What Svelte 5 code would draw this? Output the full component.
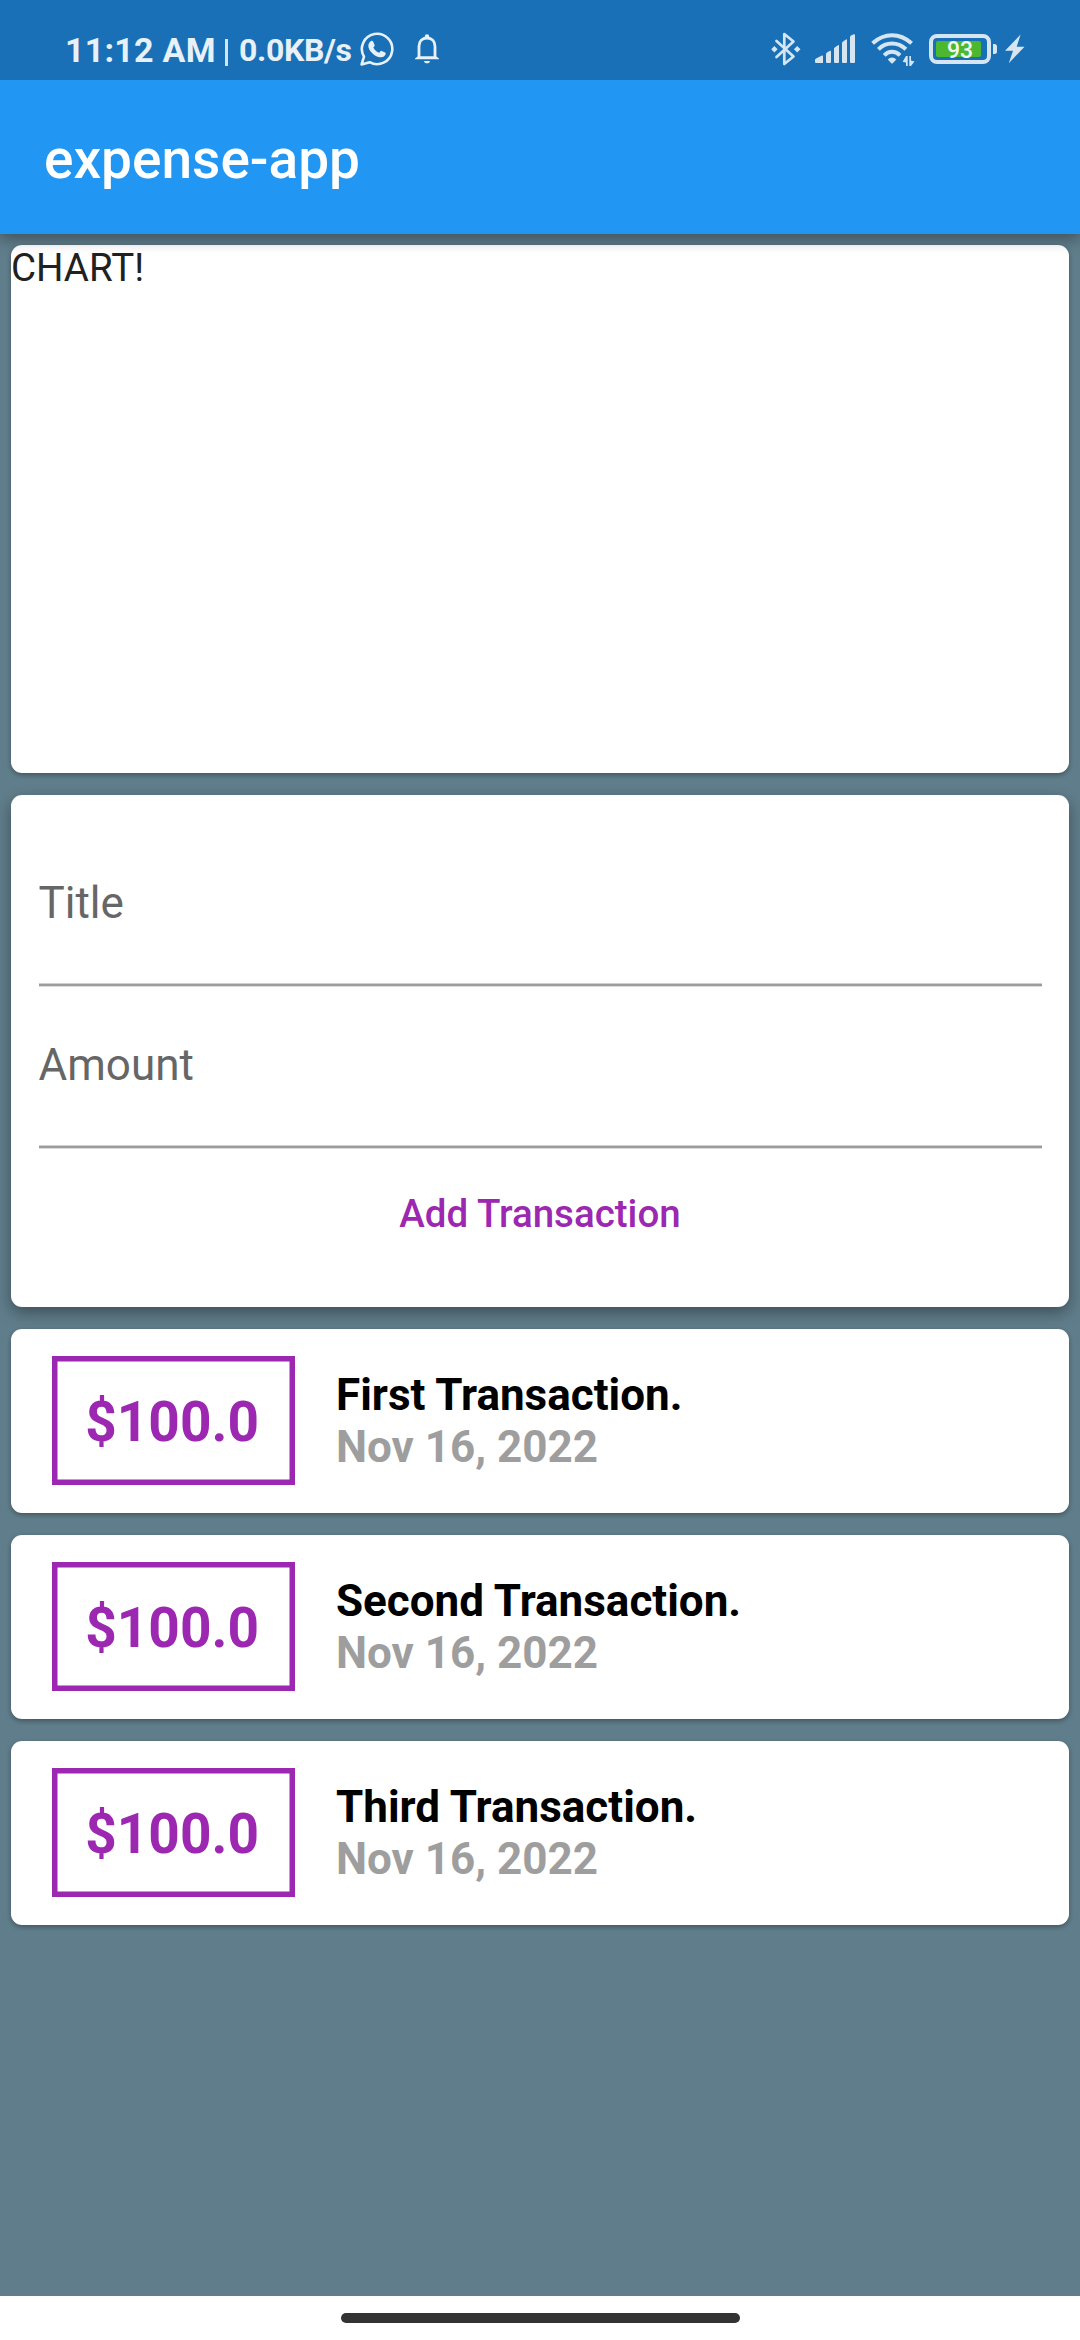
<script>
  const fields = ['Title', 'Amount'];
  const transactions = [
    { title: 'First Transaction.', amount: '$100.0', date: 'Nov 16, 2022' },
    { title: 'Second Transaction.', amount: '$100.0', date: 'Nov 16, 2022' },
    { title: 'Third Transaction.', amount: '$100.0', date: 'Nov 16, 2022' },
  ];
</script>

<div class="screen">
  <div class="status">
    <div class="status-left">
      <span class="time">11:12 AM</span>
      <span class="divider"></span>
      <span class="speed">0.0KB/s</span>
      <svg class="whatsapp" width="34" height="34" viewBox="0 0 34 34">
        <path d="M1.600 32.400 4 24.700A15.200 15.200 0 1 1 9.600 30.200Z" fill="none" stroke="currentColor" stroke-width="2.600" stroke-linejoin="round" />
        <path d="M10.800 9.200c.9-.7 1.900-.6 2.300.3l1.500 3.400c.3.7-.1 1.300-1.300 2.600 1.300 2.500 3.300 4.300 5.900 5.300 1.200-1.500 1.700-2.200 2.500-1.900l3.500 1.700c.7.4.6 1.300.2 2.200-1 2-3.500 2.900-5.800 2.400-5.300-1.200-9-4.700-10.900-9.200-.9-2.400-.1-5.300 2.100-6.800Z" fill="currentColor" />
      </svg>
      <svg class="bell" width="24" height="30" viewBox="0 0 24 30">
        <path d="M4 24V12.300C4 7.200 7.300 4 12 4s8 3.200 8 8.300V24" fill="none" stroke="currentColor" stroke-width="2.800" />
        <path d="M0 25.300V24.500L3 22.300H21L24 24.500V25.300ZM9 27h6c-.2 1.400-1.300 2.300-3 2.300S9.200 28.400 9 27Z" fill="currentColor" />
        <circle cx="12" cy="2.500" r="2.200" fill="currentColor" />
      </svg>
    </div>
    <div class="status-right">
      <svg class="bluetooth" width="30" height="34" viewBox="0 0 30 34">
        <path d="M5.500 9 22.500 24.500 13.300 32V2L22.500 9.500 5.500 25" fill="none" stroke="currentColor" stroke-width="2.700" stroke-linejoin="round" stroke-linecap="round" />
        <path d="M3.400 14 6.600 17.300 3.400 20.600.2 17.300ZM26.200 14 29.500 17.300 26.200 20.600 22.900 17.300Z" fill="currentColor" />
      </svg>
      <svg class="signal" width="40" height="29" viewBox="0 0 40 29">
        <path d="M0 26.200Q0 25 1 24.500L7 21.600Q8 21.300 8 22.300V29H1Q0 29 0 28ZM11 20.200Q11 19.200 12 18.600L15 16.800Q16 16.500 16 17.500V28Q16 29 15 29H12Q11 29 11 28ZM19 14.800Q19 13.800 20 13.200L23 11.200Q24 10.800 24 11.800V28Q24 29 23 29H20Q19 29 19 28ZM27 9.200Q27 8.200 28 7.600L31 5.400Q32 5 32 6V28Q32 29 31 29H28Q27 29 27 28ZM35 3.500Q35 2.300 36 1.600L38 .4Q40-.3 40 1V28Q40 29 39 29H36Q35 29 35 28Z" fill="currentColor" />
      </svg>
      <svg class="wifi" width="44" height="35" viewBox="0 0 44 35">
        <g fill="none" stroke="currentColor" stroke-width="4">
          <path d="M1.600 11.200Q10.500 3.200 21 3.200T40.600 11.200" />
          <path d="M7.400 17.300Q13.200 11.500 21 11.500T34.900 17.300" />
          <path d="M13.200 23.300Q16.500 19.700 21 19.700T29 23.300" />
        </g>
        <path d="M21 25.500q2.500 0 4.300 2L21.700 31.300q-.7.600-1.400 0L16.800 27.500q1.700-2 4.200-2Z" fill="currentColor" />
        <path d="M35 24h1.700v10H35V30.600L31.600 29.700 35 24ZM38.300 24h1.700V28.600L43.500 29.500 40 34H38.300Z" fill="currentColor" />
      </svg>
      <svg class="battery" width="68" height="30" viewBox="0 0 68 30">
        <rect x="2" y="2" width="58" height="26" rx="6" fill="none" stroke="currentColor" stroke-width="4" />
        <rect x="7" y="7" width="45" height="16" rx="2" fill="#4bb830" />
        <path d="M64 10h1.500Q68 10 68 12.500v5Q68 20 65.500 20H64Z" fill="currentColor" />
        <text x="31" y="24" text-anchor="middle">93</text>
      </svg>
      <svg class="bolt" width="20" height="30" viewBox="0 0 20 30">
        <path d="M15.600.5 0 16.700H8L3.800 29.300 19.500 12.700H11.700Z" fill="currentColor" />
      </svg>
    </div>
  </div>

  <header><h1>expense-app</h1></header>

  <main>
    <section class="card chart">CHART!</section>

    <section class="card form">
      {#each fields as field}
        <div class="field">{field}</div>
      {/each}
      <button type="button">Add Transaction</button>
    </section>

    {#each transactions as tx}
      <article class="card tx">
        <div class="amount">{tx.amount}</div>
        <div class="info">
          <div class="name">{tx.title}</div>
          <div class="date">{tx.date}</div>
        </div>
      </article>
    {/each}
  </main>

  <nav><div class="pill"></div></nav>
</div>

<style>
  :global(body) {
    margin: 0;
  }
  .screen {
    width: 1080px;
    height: 2340px;
    display: flex;
    flex-direction: column;
    overflow: hidden;
    background: #607d8b;
    font-family: Roboto, sans-serif;
  }
  .status {
    flex: none;
    height: 80px;
    box-sizing: border-box;
    display: flex;
    justify-content: space-between;
    padding: 32px 55px 0 65px;
    background: #1970b6;
    position: relative;
    z-index: 2;
  }
  .status-left,
  .status-right {
    display: flex;
    align-items: flex-start;
    white-space: nowrap;
  }
  .status-left {
    color: #e8f1f8;
    font-weight: 700;
    line-height: 36px;
  }
  .status-right {
    color: #d6e5f2;
  }
  .time {
    width: 160px;
    font-size: 34px;
    letter-spacing: 0.25px;
  }
  .divider {
    width: 3px;
    height: 27px;
    margin: 7px 11px 0 0;
    background: currentColor;
    opacity: 0.9;
  }
  .speed {
    width: 121px;
    font-size: 32px;
    letter-spacing: -0.35px;
  }
  .bell {
    margin: 2px 0 0 21px;
  }
  .signal {
    margin: 2px 0 0 14px;
  }
  .wifi {
    margin: 0 0 0 16px;
  }
  .battery {
    margin: 2px 0 0 14px;
  }
  .battery text {
    font-size: 23px;
    font-weight: 500;
    fill: #f1f8f4;
  }
  .bolt {
    margin: 2px 0 0 8px;
  }
  header {
    flex: none;
    height: 154px;
    display: flex;
    align-items: center;
    padding-left: 44px;
    background: #2196f3;
    color: #fff;
    position: relative;
    z-index: 1;
    box-shadow: 0 5px 14px rgba(0, 0, 0, 0.34);
  }
  h1 {
    margin: 3px 0 0;
    font-size: 55px;
    font-weight: 500;
    line-height: 64px;
  }
  main {
    flex: 1;
    min-height: 0;
    display: flex;
    flex-direction: column;
    gap: 22px;
    padding: 11px;
  }
  .card {
    flex: none;
    box-sizing: border-box;
    background: #fff;
    border-radius: 11px;
    box-shadow: 0 2px 5px rgba(0, 0, 0, 0.32);
  }
  .chart {
    height: 528px;
    color: #212121;
    font-size: 38.5px;
    line-height: 45px;
  }
  .form {
    height: 511.5px;
    padding: 27.5px;
    display: flex;
    flex-direction: column;
    box-shadow: 0 6px 15px rgba(0, 0, 0, 0.36);
  }
  .field {
    flex: none;
    height: 162.25px;
    box-sizing: border-box;
    padding-top: 54px;
    color: #666;
    font-size: 44px;
    line-height: 52px;
  }
  /* Underline with softened edges */
  .field::after {
    content: '';
    display: block;
    height: 4px;
    margin-top: 54.5px;
    background: linear-gradient(#d0d0d0 1px, #9c9c9c 1px 3px, #dcdcdc 3px);
  }
  button {
    align-self: center;
    height: 132px;
    padding: 0 22px;
    border: 0;
    background: none;
    color: #9c27b0;
    font: 500 38.5px/45px Roboto, sans-serif;
  }
  .tx {
    height: 184px;
    display: flex;
    align-items: center;
    padding-left: 41.25px;
  }
  .amount {
    box-sizing: border-box;
    width: 242.25px;
    height: 129.25px;
    padding: 34.5px 0 0 33px;
    box-shadow: inset 0 0 0 5.5px #9c27b0;
    color: #9c27b0;
    font-size: 55px;
    line-height: 64px;
    font-weight: 700;
  }
  .info {
    margin: 2px 0 0 41.5px;
    font-size: 44px;
    font-weight: 700;
    line-height: 51.75px;
  }
  .name {
    color: #000;
  }
  .date {
    color: #9e9e9e;
  }
  nav {
    flex: none;
    height: 44px;
    display: flex;
    justify-content: center;
    background: #fff;
  }
  .pill {
    width: 399px;
    height: 10px;
    margin-top: 17px;
    border-radius: 5px;
    background: #333;
  }
</style>
